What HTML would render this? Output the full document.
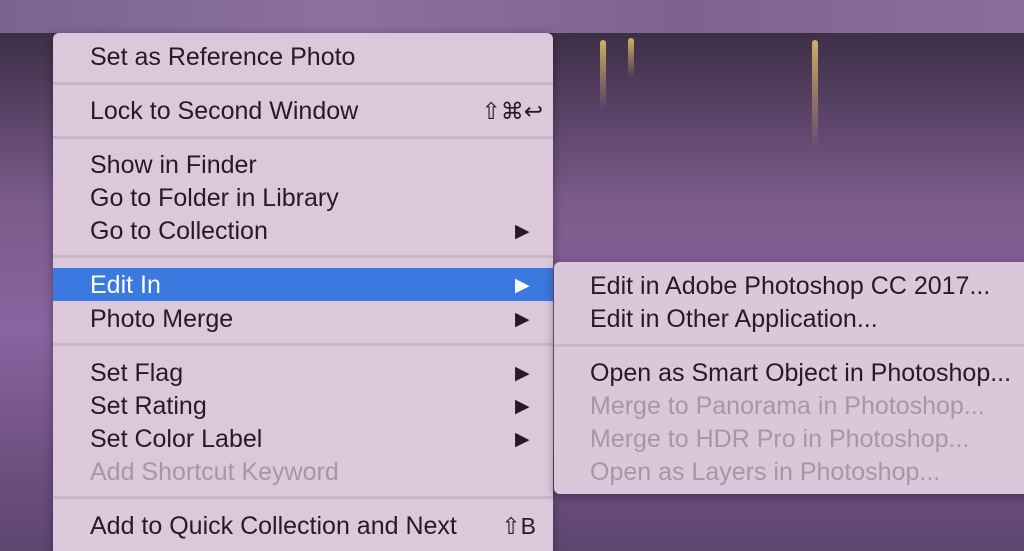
<!DOCTYPE html>
<html><head><meta charset="utf-8"><style>
html,body{margin:0;width:1024px;height:551px;overflow:hidden}
body{position:relative;font-family:"Liberation Sans",sans-serif;
background:linear-gradient(180deg,#3e2f45 33px,#4e3a5a 80px,#7a5b8a 200px,#8a64a0 330px,#6d4f7f 470px,#5e4670 551px);}
.top{position:absolute;left:0;top:0;width:1024px;height:33px;background:linear-gradient(90deg,#7b6490,#8c70a0,#7e6292,#8a6e9e);}
.light{position:absolute;width:6px;background:linear-gradient(#f0d070,rgba(200,150,120,0));border-radius:3px;opacity:.8}
.menu{position:absolute;left:53px;top:33px;width:500px;height:530px;background:#dcc8da;border-radius:6px;box-shadow:0 2px 10px rgba(0,0,0,.35)}
.sub{position:absolute;left:554px;top:262px;width:480px;height:232px;background:#dbc7da;border-radius:6px 0 0 6px;box-shadow:0 2px 10px rgba(0,0,0,.35)}
.it{position:absolute;left:0;right:0;height:33px;line-height:37px;font-size:25px;color:#251a26;padding-left:37px;white-space:nowrap}
.sub .it{padding-left:36px}
.dis{color:#a795a8}
.sep{position:absolute;left:0;right:0;height:3px;background:#c9b5c8}
.hl{background:#3a79e0;color:#fff}
.ar{position:absolute;left:462px;top:0;font-size:19px}
.sc{position:absolute;right:10px;top:0;font-size:23px}
</style></head><body>
<div class="top"></div>
<div class="light" style="left:600px;top:40px;height:70px"></div>
<div class="light" style="left:628px;top:38px;height:40px"></div>
<div class="light" style="left:812px;top:40px;height:110px"></div>
<div class="menu">
<div class="it" style="top:6px">Set as Reference Photo</div>
<div class="sep" style="top:49px"></div>
<div class="it" style="top:60px">Lock to Second Window<span class="sc">⇧⌘↩</span></div>
<div class="sep" style="top:103px"></div>
<div class="it" style="top:114px">Show in Finder</div>
<div class="it" style="top:147px">Go to Folder in Library</div>
<div class="it" style="top:180px">Go to Collection<span class="ar">▶</span></div>
<div class="sep" style="top:222px"></div>
<div class="it hl" style="top:235px;line-height:35px">Edit In<span class="ar">▶</span></div>
<div class="it" style="top:268px">Photo Merge<span class="ar">▶</span></div>
<div class="sep" style="top:310px"></div>
<div class="it" style="top:322px">Set Flag<span class="ar">▶</span></div>
<div class="it" style="top:355px">Set Rating<span class="ar">▶</span></div>
<div class="it" style="top:388px">Set Color Label<span class="ar">▶</span></div>
<div class="it dis" style="top:421px">Add Shortcut Keyword</div>
<div class="sep" style="top:463px"></div>
<div class="it" style="top:475px">Add to Quick Collection and Next<span class="sc" style="right:17px">⇧B</span></div>
</div>
<div class="sub">
<div class="it" style="top:6px">Edit in Adobe Photoshop CC 2017...</div>
<div class="it" style="top:39px">Edit in Other Application...</div>
<div class="sep" style="top:82px"></div>
<div class="it" style="top:93px">Open as Smart Object in Photoshop...</div>
<div class="it dis" style="top:126px">Merge to Panorama in Photoshop...</div>
<div class="it dis" style="top:159px">Merge to HDR Pro in Photoshop...</div>
<div class="it dis" style="top:192px">Open as Layers in Photoshop...</div>
</div>
</body></html>
